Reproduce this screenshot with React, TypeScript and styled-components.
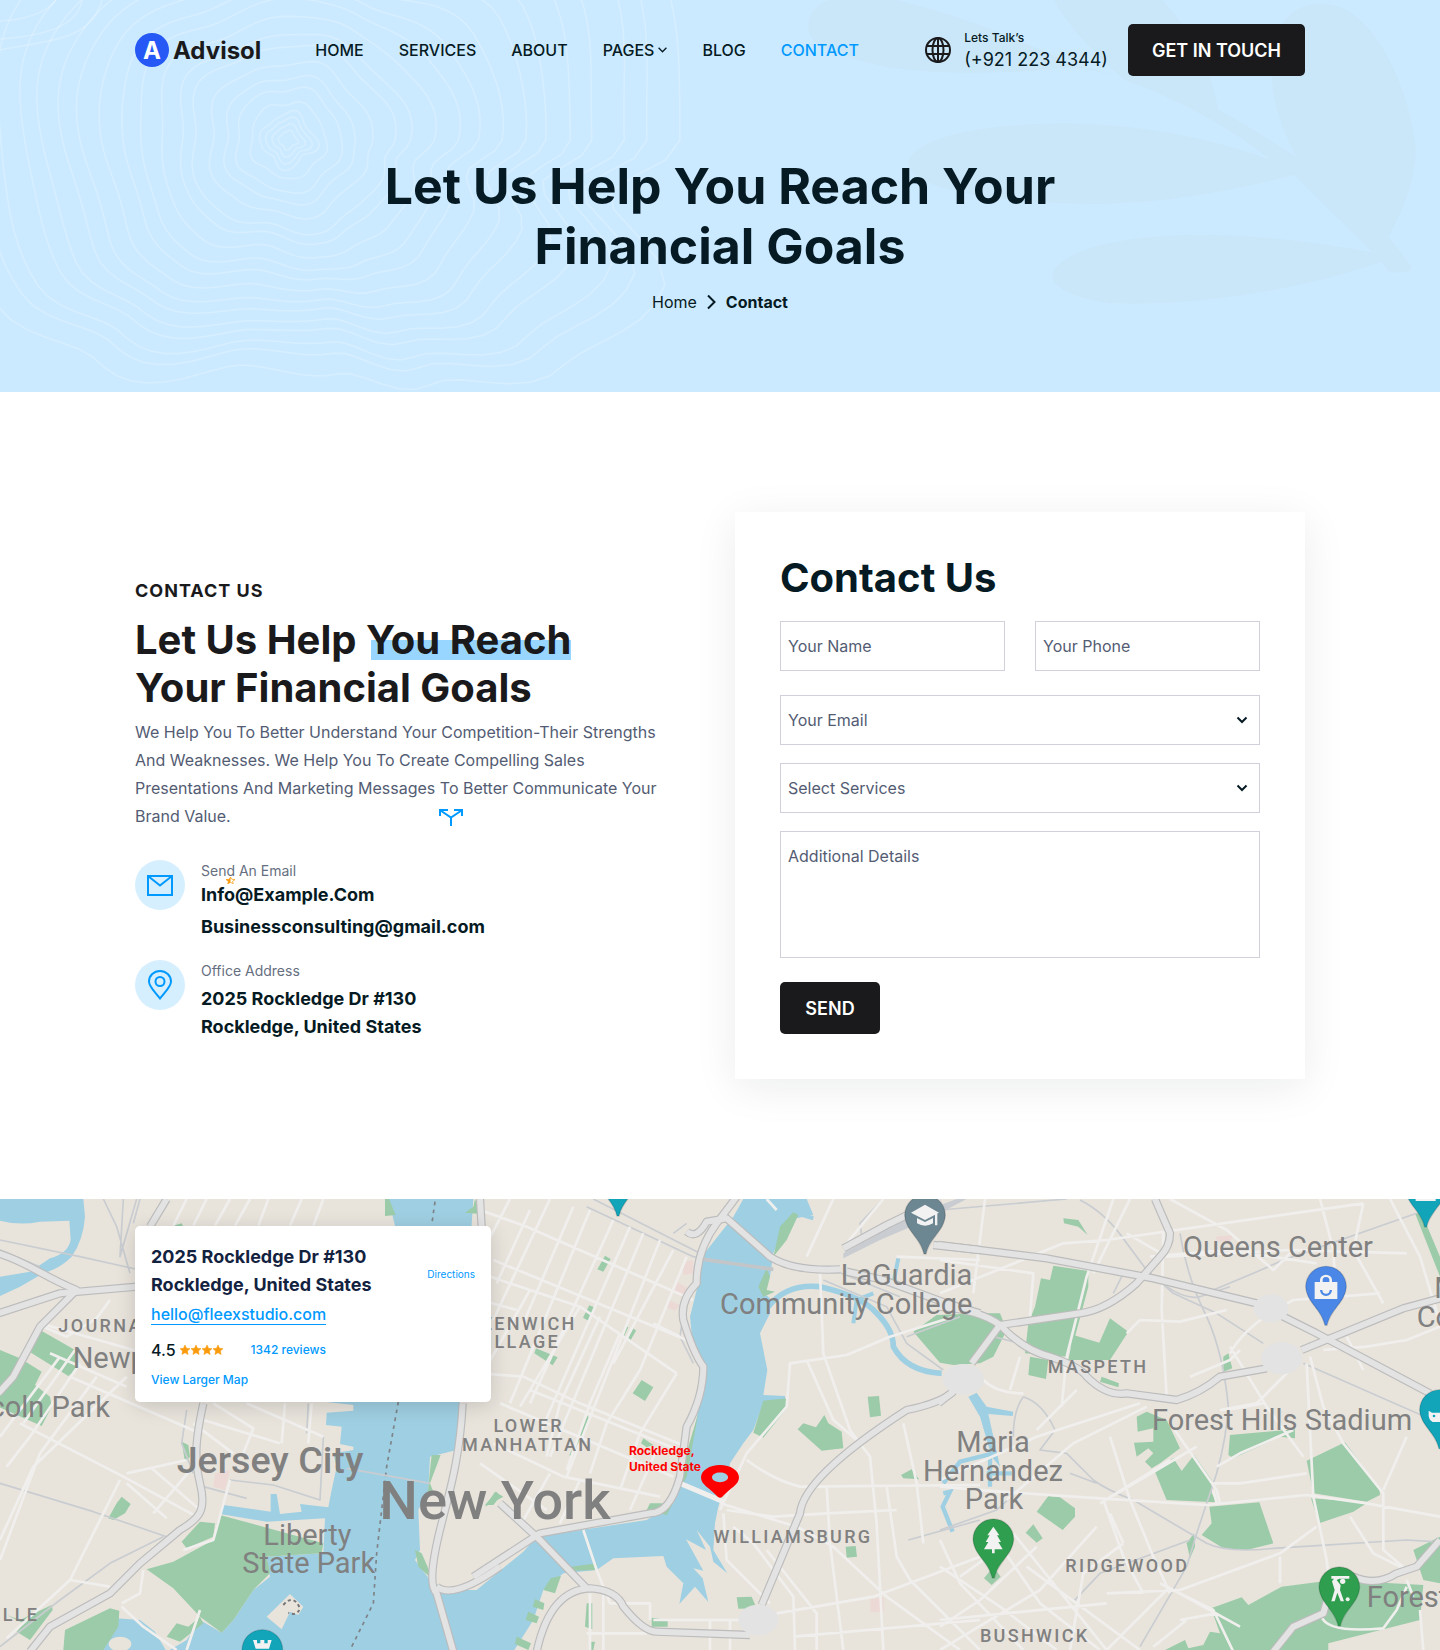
import React from "react";
import styled, { createGlobalStyle } from "styled-components";

const GlobalStyle = createGlobalStyle`
  *, *::before, *::after { box-sizing: border-box; }
  body { margin: 0; background: #fff; font-family: Inter, "Liberation Sans", sans-serif; color: #061a23; }
  h1, h2, h3, p, ul, address { margin: 0; padding: 0; font-style: normal; }
  a { color: inherit; text-decoration: none; }
  button, input, select, textarea { font-family: inherit; }
`;

/* ---------- shared ---------- */
const Container = styled.div`
  position: relative;
  width: 100%;
  max-width: 1170px;
  margin: 0 auto;
`;

const Button = styled.button`
  min-width: 100px;
  height: 52px;
  padding: 2px 24px 0;
  border: 0;
  border-radius: 5px;
  background: #1a1a1c;
  color: #fff;
  font-size: 18px;
  font-weight: 600;
  line-height: 28px;
  white-space: nowrap;
  cursor: pointer;
`;

/* ---------- hero ---------- */
const Hero = styled.section`
  position: relative;
  overflow: hidden;
  background: #cceaff;
  padding: 24px 0 76px;
`;

const HeroArt = styled.svg<{ $side: "left" | "right" }>`
  position: absolute;
  top: 0;
  ${(p) => p.$side}: 0;
`;

const Header = styled.header`
  display: flex;
  align-items: center;
  gap: 54px;
  height: 52px;
`;

const Logo = styled.a`
  display: flex;
  align-items: center;
  gap: 4px;
  color: #1a1a1c;
  font-size: 24px;
  font-weight: 700;
`;

const LogoMark = styled.span`
  display: grid;
  place-items: center;
  width: 34px;
  height: 34px;
  border-radius: 50%;
  background: #2558f5;
  color: #fff;
`;

const NavList = styled.ul`
  display: flex;
  gap: 35px;
  list-style: none;
`;

const NavLink = styled.a<{ $active?: boolean }>`
  display: flex;
  align-items: center;
  gap: 4px;
  font-size: 16px;
  font-weight: 500;
  line-height: 24px;
  color: ${(p) => (p.$active ? "#0099ff" : "#061a23")};
`;

const HeaderActions = styled.div`
  display: flex;
  align-items: center;
  gap: 20px;
  margin-left: auto;
`;

const Talk = styled.a`
  display: flex;
  align-items: center;
  gap: 13px;
`;

const TalkText = styled.span`
  display: grid;
`;

const TalkLabel = styled.span`
  font-size: 12px;
  font-weight: 500;
  line-height: 20px;
`;

const TalkNumber = styled.span`
  font-size: 18px;
  line-height: 24px;
`;

const HeroTitle = styled.h1`
  max-width: 720px;
  margin: 80px auto 0;
  text-align: center;
  font-size: 50px;
  font-weight: 700;
  line-height: 60px;
`;

const Breadcrumb = styled.nav`
  display: flex;
  align-items: center;
  justify-content: center;
  gap: 9px;
  margin-top: 12px;
  font-size: 16px;
  line-height: 28px;
`;

const Current = styled.span`
  font-weight: 700;
`;

/* ---------- contact ---------- */
const ContactSection = styled.section`
  padding: 120px 0;
`;

const ContactGrid = styled(Container)`
  display: grid;
  grid-template-columns: minmax(0, 1fr) minmax(0, 570px);
  gap: 60px;
  align-items: start;
`;

const Intro = styled.div`
  position: relative;
  padding-top: 66px;
`;

const Eyebrow = styled.p`
  color: #1a1a1c;
  font-size: 18px;
  font-weight: 700;
  line-height: 26px;
  letter-spacing: 1px;
`;

const IntroTitle = styled.h2`
  margin-top: 12px;
  color: #1a1a1c;
  font-size: 40px;
  font-weight: 700;
  line-height: 48px;
  white-space: nowrap;
`;

const Marked = styled.span`
  background: linear-gradient(#99d6ff, #99d6ff) 5px 25px / 100% 20px no-repeat;
`;

const IntroText = styled.p`
  margin-top: 6px;
  color: #535c73;
  font-size: 16px;
  line-height: 28px;
`;

const SplitMark = styled.svg`
  position: absolute;
  top: 297px;
  left: 304px;
`;

const StarMark = styled.svg`
  position: absolute;
  top: 17px;
  left: 25px;
`;

const InfoRow = styled.div`
  display: flex;
  gap: 16px;
  margin-top: 21px;
  &:first-of-type { margin-top: 30px; }
`;

const InfoIcon = styled.span`
  display: grid;
  place-items: center;
  flex: none;
  width: 50px;
  height: 50px;
  border-radius: 50%;
  background: #d6efff;
`;

const InfoBody = styled.div`
  position: relative;
`;

const InfoLabel = styled.p`
  margin-bottom: 1px;
  color: #666f80;
  font-size: 14px;
  line-height: 22px;
`;

const MailLink = styled.a`
  display: block;
  font-size: 18px;
  font-weight: 700;
  line-height: 24px;
  & + & { margin-top: 8px; }
`;

const Address = styled.address<{ $color?: string }>`
  color: ${(p) => p.$color || "#061a23"};
  font-size: 18px;
  font-weight: 700;
  line-height: 28px;
`;

const OfficeAddress = styled(Address)`
  margin-top: 3px;
`;

/* ---------- form ---------- */
const Form = styled.form`
  display: grid;
  gap: 18px;
  padding: 42px 45px 45px;
  background: #fff;
  box-shadow: 0 8px 40px rgba(6, 26, 35, 0.08);
`;

const FormTitle = styled.h2`
  margin-bottom: 1px;
  font-size: 40px;
  font-weight: 700;
  line-height: 48px;
`;

const Pair = styled.div`
  display: grid;
  grid-template-columns: 1fr 1fr;
  gap: 30px;
  margin-bottom: 6px;
`;

const fieldStyle = `
  width: 100%;
  min-width: 0;
  border: 1px solid #d0d1da;
  border-radius: 0;
  background: #fff;
  color: #535c73;
  font-size: 16px;
  line-height: 28px;
  outline: 0;
  &::placeholder { color: #535c73; opacity: 1; }
`;

const Input = styled.input`
  ${fieldStyle}
  height: 50px;
  padding: 0 7px;
`;

const SelectBox = styled.div`
  position: relative;
`;

const Select = styled.select`
  ${fieldStyle}
  display: block;
  height: 50px;
  padding: 0 40px 0 7px;
  appearance: none;
`;

const SelectChevron = styled.svg`
  position: absolute;
  top: 20px;
  right: 12px;
  pointer-events: none;
`;

const TextArea = styled.textarea`
  ${fieldStyle}
  display: block;
  height: 127px;
  padding: 10px 7px;
  resize: none;
`;

const SendButton = styled(Button)`
  justify-self: start;
  margin-top: 6px;
`;

/* ---------- map ---------- */
const MapSection = styled.section`
  position: relative;
  overflow: hidden;
  min-height: 451px;
  padding: 27px 0;
  background: #e8e4dc;
`;

const MapArt = styled.svg`
  position: absolute;
  inset: 0;
  width: 100%;
  height: 100%;
`;

const MapCard = styled.div`
  display: grid;
  grid-template-columns: 1fr auto;
  width: 356px;
  padding: 17px 16px 12px;
  border-radius: 5px;
  background: #fff;
  box-shadow: 0 4px 20px rgba(0, 0, 0, 0.15);
`;

const PlaceMail = styled.a`
  justify-self: start;
  margin-top: 5px;
  border-bottom: 1px solid #0099ff;
  color: #0099ff;
  font-size: 16px;
  font-weight: 500;
  line-height: 20px;
`;

const SmallLink = styled.a`
  color: #0099ff;
  font-size: 12px;
  font-weight: 500;
  line-height: 20px;
`;

const Directions = styled.a`
  align-self: center;
  padding-top: 6px;
  color: #0099ff;
  font-size: 10px;
  line-height: 16px;
`;

const Rating = styled.div`
  display: flex;
  align-items: center;
  grid-column: 1 / -1;
  margin-top: 13px;
  font-size: 16px;
  font-weight: 500;
  line-height: 24px;
`;

const Stars = styled.span`
  display: flex;
  gap: 1px;
  margin: 0 28px 0 4px;
`;

const LargerMap = styled(SmallLink)`
  grid-column: 1 / -1;
  margin-top: 8px;
`;

const Marker = styled.div`
  position: absolute;
  top: 244px;
  right: calc(50% - 19px);
  display: flex;
  align-items: flex-start;
  color: #ff0000;
  font-size: 12px;
  font-weight: 700;
  line-height: 16px;
`;

const MarkerPin = styled.svg`
  margin-top: 22px;
`;

/* ---------- contour lines ---------- */
const contourKeys: [number, number][] = [
  [0, 392], [10, 322], [21, 390], [40, 346], [60, 280], [78, 236], [100, 222],
  [130, 290], [150, 330], [180, 320], [210, 345], [240, 300], [270, 262],
  [300, 300], [330, 400], [360, 392],
];

function keyRadius(deg: number) {
  const d = (deg + 360) % 360;
  let i = 0;
  while (contourKeys[i + 1][0] < d) i += 1;
  const [a, ra] = contourKeys[i];
  const [b, rb] = contourKeys[i + 1];
  const t = (1 - Math.cos(((d - a) / (b - a)) * Math.PI)) / 2;
  return ra + (rb - ra) * t;
}

function contour(level: number) {
  const points: string[] = [];
  for (let deg = 0; deg < 360; deg += 3) {
    const rad = (deg * Math.PI) / 180;
    const blend = Math.min(1, Math.max(0, (level - 0.15) * 1.3));
    const base = keyRadius(deg) * blend + 290 * (1 - blend);
    const calm = 1 - level * 0.75;
    const wobble =
      1 +
      calm * 0.06 * Math.sin(rad * 5 + level * 5) +
      calm * 0.03 * Math.sin(rad * 8 - level * 8) +
      (level < 0.12 ? 0.14 * Math.sin(rad * 4 + 1) : 0);
    const r = base * level * wobble;
    points.push(`${(288 + r * Math.cos(rad)).toFixed(1)} ${(140 + r * Math.sin(rad)).toFixed(1)}`);
  }
  return `M${points.join("L")}Z`;
}

const contourLevels = [
  0.03, 0.05, 0.07, 0.09, 0.13, 0.18, 0.22, 0.27, 0.33, 0.37, 0.43, 0.49,
  0.54, 0.6, 0.66, 0.71, 0.77, 0.82, 0.89, 0.94, 1.02,
];

const Contours = () => (
  <HeroArt $side="left" width="720" height="392" viewBox="0 0 720 392" aria-hidden="true">
    <g fill="none" stroke="#fff" strokeOpacity="0.22" strokeWidth="1.5">
      {contourLevels.map((level) => (
        <path key={level} d={contour(level)} />
      ))}
      <path d="M0 21C25 20 48 12 56 0M0 39C40 36 78 28 82 0M0 50C50 40 92 40 102 0" />
    </g>
  </HeroArt>
);

const Leaves = () => (
  <HeroArt $side="right" width="720" height="392" viewBox="0 0 720 392" aria-hidden="true">
    <g fill="#cae7fa" transform="scale(.4592 .3333)">
      <path d="M192 80C192 20 230 -20 330 -15C480 20 640 110 780 200C600 230 400 225 300 180C230 150 192 130 192 80Z" />
      <path d="M640 210C720 195 800 205 840 222C980 280 1120 390 1190 472L1270 500L1255 470C1210 430 1130 360 1085 330C1070 200 1030 100 960 -5L725 -5C760 90 840 190 880 240L780 190Z" />
      <path d="M1190 475C1100 430 950 375 760 370C600 370 440 400 410 480C400 570 600 610 830 612C950 610 1100 580 1250 525L1420 757C1330 735 1220 710 1080 705C900 700 760 740 728 810C710 850 750 890 850 910C1000 920 1250 880 1440 785L1455 812Q1480 825 1503 812L1505 797L1457 712C1480 640 1515 560 1515 440C1500 250 1420 20 1320 12C1270 5 1215 40 1205 150C1190 250 1215 370 1255 470Z" />
    </g>
  </HeroArt>
);

/* ---------- icons ---------- */
const Globe = () => (
  <svg width="26" height="26" viewBox="0 0 26 26" fill="none" stroke="#1a1a1c" strokeWidth="2" aria-hidden="true">
    <circle cx="13" cy="13" r="12" />
    <ellipse cx="13" cy="13" rx="5.5" ry="12" />
    <path d="M2 9h22M2 17h22M13 1v24" />
  </svg>
);

const starPath = "M5.500 0l1.600 3.600 3.900.4-2.900 2.600.8 3.900-3.400-2-3.400 2 .8-3.900L0 4l3.900-.4z";

const Star = () => (
  <svg width="10" height="10" viewBox="0 0 11 11" fill="#f99b0c" stroke="#f99b0c" strokeWidth="0.6" strokeLinejoin="round" aria-hidden="true">
    <path d={starPath} />
  </svg>
);

const DropChevron = () => (
  <SelectChevron width="12" height="10" viewBox="0 0 12 10" fill="none" stroke="#061a23" strokeWidth="2" aria-hidden="true">
    <path d="M1.500 2.500L6 7l4.500-4.500" />
  </SelectChevron>
);

/* ---------- map drawing: three tiles laid side by side ---------- */
type Tile = { x: number; parks: string[]; streets: string; rails: string; highways: string[]; blocks?: string[] };

const tiles: Tile[] = [
  {
    x: 0,
    parks: [
      "120,420 225,480 228,540 205,558 80,480", "-5,478 60,505 125,545 105,585 150,620 155,650 125,708 -5,650",
      "365,920 392,942 375,970 340,990 325,985 350,940",
      "660,975 970,1060 965,1090 800,1100 810,1150 760,1200 700,1290 665,1328 600,1280 520,1195 440,1138 520,1115 640,1050 650,1000",
      "545,1055 600,995 645,1000 640,1040 560,1075", "190,1380 195,1320 330,1255 358,1262 355,1310 310,1380",
      "20,1275 60,1290 155,1245 158,1260 90,1350 50,1325 70,1300", "500,1340 530,1300 565,1310 600,1280 610,1300 540,1355",
      "545,755 565,765 570,800 555,815", "1295,795 1322,795 1290,880 1300,905 1283,908", "1155,27 1167,27 1187,75 1155,78",
      "1425,27 1440,72 1395,68 1420,50", "1455,945 1490,905 1500,920 1480,945", "1245,1080 1265,1090 1300,1170 1255,1130",
      "520,107 545,100 550,110",
    ],
    streets:
      "M120 400L400 480M150 490L380 590M560 27L520 107M620 27L580 107M690 27L645 107M750 27L705 107M805 27L775 107M905 27L870 107M970 27L940 107M130 410L200 440L290 385L330 330M240 520L90 740L20 830M290 560L120 790L0 1110M180 500L0 740M225 480L70 700M60 700L370 860L600 985M360 870L290 1010L210 1170L20 1345M0 1050L100 830L380 560M210 560L600 730M380 850L560 810M450 830L600 960M380 880L500 985M460 970L580 830M210 1170L330 1190M690 870L640 1050L550 1080M610 690L840 760M640 640L760 715L730 790M855 640L845 760M935 640L925 760M580 700L700 790M740 640L970 740M430 1140L420 1210L365 1240M365 1250L430 1310L530 1380M600 1260L560 1380",
    rails:
      "M0 150L240 200L420 240M310 27L350 110L390 250M370 27L360 200L410 27M420 27L400 100M0 880L280 965L500 1040M490 1040L330 1120L180 1230L0 1370M560 660L545 760L580 850M610 890L740 925M690 870L820 885L960 930L970 740M925 640L920 730M1040 835L1290 880M0 180L120 230",
    highways: ["M-5 370L180 310L410 290", "M500 27L450 110", "M-5 190C90 220 130 260 230 300L120 410L40 560L-5 610", "M610 640C590 730 580 800 600 880C620 960 600 985 540 1020L420 1120L330 1210L150 1310L90 1385", "M1440 27L1445 110", "M1388 640C1380 800 1350 900 1330 980C1290 1130 1290 1190 1310 1210L1360 1385", "M1310 1190Q1360 1230 1500 1130"],
    blocks: ["645,850 690,840 675,900 640,890"],
  },
  {
    x: 1440,
    parks: [
      "375,197 392,207 370,245 352,238", "328,346 347,354 325,392 309,383", "437,407 445,412 432,440 425,435", "460,415 468,422 452,450 445,443",
      "168,475 233,502 218,526 163,490", "485,570 520,592 495,633 458,610", "322,677 328,685 305,740 300,735", "295,745 300,748 272,800 268,795",
      "490,745 520,765 500,772 483,760", "15,950 45,905 70,920", "655,670 620,860 560,975 500,960 510,940 560,940 610,820",
      "940,67 955,75 920,150 880,200 900,110", "860,235 870,260 860,300 885,305 850,320 835,290", "850,632 920,625 920,655 850,743 820,728",
      "1033,675 1045,700 1085,725 1090,775 1025,782 953,718 970,700 1008,712", "1163,620 1197,618 1203,677 1170,682", "1300,425 1370,375 1500,370 1560,370 1580,420 1540,500 1500,520 1420,525 1380,518",
      "1263,855 1295,838 1317,868 1270,865", "1097,1070 1127,1068 1131,1100 1100,1103", "770,1222 815,1220 830,1255 775,1256", "515,1283 563,1290 563,1310 515,1310",
      "212,1165 243,1157 225,1210 190,1200", "165,1228 193,1240 190,1260 158,1250", "145,1265 177,1280 170,1300 137,1290", "110,1340 153,1360 145,1380 105,1362",
      "320,1240 337,1240 337,1318 315,1310", "330,1355 345,1355 340,1380 330,1380", "275,1130 350,1120 350,1140 275,1142",
    ],
    streets:
      "M0 60L140 110L640 330M0 250L300 350L590 550M40 210L620 450M0 550L130 560L300 640L620 770M0 330L110 360M90 27L0 200M150 60L50 280M210 27L40 390M280 50L130 400M330 60L90 640M400 90L150 640M450 110L180 730M490 130L210 800M540 150L260 860M580 180L400 520M620 200L480 540M20 530L150 300M300 350L120 650M360 380L240 640L200 800M420 430L330 640L260 840M590 550L480 730L420 900M480 540L380 700L330 850M520 400L600 440M60 640L580 860M40 760L250 860L540 920M0 820L200 960M150 600L620 790M210 850L130 990M300 870L240 1000M530 780L450 960M920 650L800 790L720 960M920 650L930 520L1100 495L1230 440L1420 380M1060 27L980 200M1020 250L1030 490L1110 720L1170 800L1190 1000L1210 1380M980 510L1060 690L1130 750M800 810Q880 870 960 890L1500 885M740 960L880 980L1040 970L1250 960M1040 890L1050 1060L1090 1380M720 940L950 1010L1060 1070L1220 1220L1440 1380M730 970L740 1110L870 1240M760 1010L820 1060L940 1220L945 1380M860 1080L1010 1270L1010 1380M890 1270L1180 1220L1500 1100M940 1340L1500 1290M1270 700L1310 880L1330 1060M1220 890L1250 1100L1290 1170L1500 1380M310 1020L350 1140L390 1240L510 1240L510 1290M330 1210V1380M370 1210V1380M520 1290L780 1290M690 1290V1380M750 1290V1380M320 1330H500M1210 27L1100 160M860 27L890 60M1250 200L1500 210",
    rails: "M320 50L640 200L870 240M340 27L660 190M580 130L620 100M610 370L600 440L640 520M1030 270L1220 350L1280 460L1390 540M1285 1050L1500 990M1150 170L1140 100L1210 27M1440 380L1280 440M1060 240L1260 320",
    highways: ["M770 20L710 100Q650 180 650 280Q600 330 610 390Q640 490 670 530Q670 620 620 710L600 860Q570 970 510 970L180 1030L-20 1160", "M620 125Q650 150 680 95L740 85L870 200Q940 245 1080 238", "M60 940L180 1050L320 1195", "M170 1385Q210 1200 330 1195Q410 1200 430 1250Q490 1325 530 1325L810 1335", "M1420 605Q1380 640 1280 660Q970 860 960 970L845 1245", "M1090 175L1220 105L1380 27", "M1360 165L1500 180", "M1100 245L1210 270L1400 340L1500 370"],
    blocks: ["610,215 640,210 640,250 610,255", "580,290 595,278 625,295 605,322 578,305", "565,330 600,345 585,362 558,350", "1170,1228 1210,1222 1212,1265 1172,1267"],
  },
  {
    x: 2820,
    parks: [
      "370,85 415,90 443,135 415,110 372,100", "340,227 445,243 445,290 405,440 380,500 255,490 265,400 285,350 303,265 330,270", "270,500 325,510 318,567 265,555",
      "510,385 565,425 510,510 385,510 400,435 478,458", "865,490 877,535 850,545 850,500", "485,560 537,580 535,592 480,575",
      "590,680 620,665 680,690 720,775 660,820 635,835 615,815 640,790 625,775 590,800 582,758 640,755 640,715 593,725", "645,845 700,805 725,843 762,795 815,870 815,910 830,937 680,930",
      "870,735 1065,718 1065,745 1020,740 880,805 865,795", "1100,812 1215,757 1318,895 1320,915 1280,935 1120,910", "1113,925 1260,935 1280,940 1240,965 1137,1000",
      "808,950 958,937 1000,1060 920,1080 850,1075 785,1035 815,1000", "740,1060 762,1030 765,1070 750,1105", "325,918 360,922 405,955 405,980 368,1020 290,965",
      "280,1003 308,1045 290,1058 257,1028", "160,1130 182,1160 155,1185 132,1165", "813,1255 905,1222 925,1245 1025,1190 1180,1170 1450,1185 1440,1290 1165,1360 1165,1385 860,1385",
      "675,1380 735,1350 745,1375 790,1365 810,1325 840,1330 880,1385", "1420,1080 1500,1040 1500,1180 1450,1170 1440,1140", "1425,70 1445,70 1500,200 1500,260",
    ],
    streets:
      "M135 27L100 310M0 210L280 250L270 380M520 27L440 260L380 500L365 650M570 27L460 250M0 310L370 160L500 150L1270 40M560 130L680 200L1050 180M670 130L665 360L680 620M630 200L860 180L1130 220M690 27L860 120L1000 240L1060 180L1400 190M1140 27L1180 180L1190 350M1270 40L1240 180L1330 340M1350 27L1440 200L1500 400M870 470L980 650L1090 800M870 490Q920 400 1060 330L1320 310M1110 500L1150 650L1210 760L1330 910L1330 1080L1400 1140M1100 520L1120 920L1160 1110L1170 1200M1080 510L950 640L840 660M750 560L870 510L900 480M600 390L720 395L860 360M560 430L600 390M1150 480L1280 470L1400 450L1500 410M1220 440L1270 540M1400 740L1330 900M600 640L290 740L0 870M620 650L400 760L200 930M770 770L480 940M480 940L690 810M510 740L570 930L640 1100L690 1210M490 930L550 1100L610 1210M830 830L900 790L1060 720M820 880L900 880L1100 850M690 700L830 900L840 940M0 890L180 905L480 925L800 945L1100 915L1280 940L1500 980M1230 980L1300 1090L1400 1140M1130 1010L1020 1090L720 1200L500 1210M1020 1100L1020 1180M830 940L820 900M410 600L290 720M240 500L210 600M130 570Q170 610 250 610M860 660L970 640M690 1190L500 1380M550 1060L430 1150L390 1380M290 1070L120 1230L0 1310M0 1380L300 1200L470 1010M220 1030L500 1380M190 1080L300 1240L480 1380M0 1130L180 1250L350 1380M0 1050L60 1180L250 1380M60 1160L200 1060M0 1290L500 1240M260 1130L600 1380M510 970L550 1060M660 1180L820 1260L880 1385M720 1290L830 1270M640 1370L740 1290M700 1200L900 1310M1145 1280Q1160 1330 1330 1315L1370 1260L1400 1190M1440 1260L1450 1380M1400 1170L1420 1220",
    rails:
      "M0 60L380 27M420 30Q500 70 560 160L620 240L700 310L830 370L970 460M720 130Q740 260 800 380Q850 490 865 650Q860 740 830 850L770 1030L740 1130L600 1370M820 300L940 250L1030 210L1430 70M680 290Q740 330 780 320L870 290M1090 520L1500 700M250 620Q220 660 220 740M250 620Q310 640 345 720L300 780L380 790L460 870Q500 900 580 930L800 1060Q860 1090 1000 1075L1400 1050L1480 1055M270 870L170 960L0 1020M400 1235L480 1150L750 1050M390 850L470 880M550 250L520 310M160 440L240 460",
    highways: ["M-5 165L320 205L640 265L950 340L1130 430L1470 610", "M645 27L690 130Q690 170 660 200L590 280Q500 360 420 370L180 405L95 520", "M-5 350Q120 360 180 405Q250 480 330 500Q420 530 440 560Q500 620 560 610L710 630Q780 610 840 560L980 535", "M1085 480L1390 355L1500 325", "M1000 1385L1060 1310L1150 1270L1170 1200L1240 1160Q1310 1190 1370 1150L1430 1130L1500 1050", "M-5 640L45 600"],
    blocks: ["825,140 880,135 870,155 835,155"],
  },
];

type LabelSpec = [string, number, number, number, ("start" | "middle" | "end")?];

const placeLabels: LabelSpec[] = [
  ["Jersey City", 810, 850, 113, "middle"], ["New York", 1485, 987, 163, "middle"],
];

const areaLabels: LabelSpec[] = [
  ["Newport", 218, 535, 87], ["Lincoln Park", 330, 680, 87, "end"], ["Liberty", 922, 1064, 87, "middle"], ["State Park", 926, 1149, 87, "middle"],
  ["LaGuardia", 2917, 286, 87, "end"], ["Community College", 2917, 373, 87, "end"], ["Queens Center", 3834, 200, 87, "middle"],
  ["Forest Hills Stadium", 3846, 721, 87, "middle"], ["Maria", 2979, 785, 87, "middle"], ["Hernandez", 2979, 872, 87, "middle"], ["Park", 2982, 958, 87, "middle"],
  ["Forest", 4100, 1252, 87], ["M", 4303, 325, 87], ["Co", 4250, 412, 87],
];

const districtLabels: LabelSpec[] = [
  ["JOURNAL", 175, 426, 54], ["GREENWICH", 1730, 420, 54, "end"], ["VILLAGE", 1680, 475, 54, "end"], ["LOWER", 1586, 727, 54, "middle"],
  ["MANHATTAN", 1583, 782, 54, "middle"], ["WILLIAMSBURG", 2379, 1060, 54, "middle"], ["MASPETH", 3294, 549, 54, "middle"],
  ["RIDGEWOOD", 3382, 1147, 54, "middle"], ["BUSHWICK", 3104, 1355, 54, "middle"], ["VILLE", 118, 1292, 54, "end"],
];

const Labels = ({ items }: { items: LabelSpec[] }) => (
  <>
    {items.map(([text, x, y, size, anchor]) => (
      <text key={text} x={x} y={y} fontSize={size} textAnchor={anchor || "start"}>
        {text}
      </text>
    ))}
  </>
);

const MapPin = ({ x, y, fill, children }: { x: number; y: number; fill: string; children?: React.ReactNode }) => (
  <g transform={`translate(${x} ${y})`}>
    <path d="M-61 0A61 61 0 1 1 61 0C58 48 14 66 3 116H-3C-14 66 -58 48 -61 0Z" fill={fill} stroke="#000" strokeOpacity="0.15" strokeWidth="4" />
    <g fill="#f2f2f2">{children}</g>
  </g>
);

const CityMap = () => (
  <MapArt viewBox="0 27 4320 1353" preserveAspectRatio="xMidYMin slice" role="img" aria-label="Map of New York">
    <rect width="4320" height="1400" fill="#e8e4dc" />
    <g fill="#9fcfe2">
      <path d="M0 27H250L255 80Q250 150 215 200Q180 235 130 250L60 290L0 318V260L90 245L150 205Q205 190 212 150L208 92L120 95Q60 108 0 92Z" />
      <path d="M1165 27L1185 107L1000 300L975 635L1060 645L1060 662L980 668L978 705L1025 710L1020 762L1060 770V780L1000 790L1010 830L995 900L985 952L900 942L905 965L840 972L830 912L812 912V965L670 945L660 972L800 995L975 985L970 1090L800 1100L810 1160L760 1200L700 1290L665 1328L600 1290L560 1350L500 1385H1540L1600 1290L1630 1200L1690 1150L1790 1140L1840 1105L1990 1098L2000 1130L2050 1180L2038 1242L2085 1190L2125 1236L2108 1165L2080 1135L2110 1142L2058 1048L2118 1080L2090 1020L2130 1070L2140 1115L2182 1150L2140 1080L2145 1000L2155 950L2180 880L2190 820L2230 760L2260 720L2290 640L2355 630V618L2290 615L2302 540L2280 430L2310 370L2310 325L2280 300L2310 260L2320 190L2360 90L2440 75L2420 27H2230L2200 80L2105 200L2090 300L2070 380L2080 480L2115 520L2100 640L2060 820L2020 940L1940 990L1610 1040L1570 1085L1430 1200H1340L1290 1170L1245 1110L1260 1080L1255 960L1285 900L1290 800L1370 780L1380 635L1420 27Z" />
      <path d="M240 1385Q270 1290 350 1285L420 1290L465 1325L500 1385Z" />
      <path d="M2905 620L2930 608L2960 650L3040 665L3038 678L2965 672L3000 830L2975 800L2940 680Z" />
    </g>
    <g fill="none" stroke="#9fcfe2">
      <path d="M2305 350Q2360 280 2460 290Q2590 320 2630 370Q2680 420 2680 470Q2720 545 2825 550" strokeWidth="17" />
      <path d="M2560 400L2570 330L2620 310M2680 280L2695 205M2390 70L2440 85" strokeWidth="12" />
      <path d="M2980 790L2880 815L2830 880M2970 800V890M2960 850H3035M2830 910L2850 905L2828 950L2858 1025" strokeWidth="13" />
    </g>
    <path d="M800 1280L870 1212L910 1250L895 1275L870 1265L845 1318Z" fill="#e8e4dc" />
    <ellipse cx="360" cy="1362" rx="34" ry="22" fill="#e8e4dc" />
    <path d="M850 1245Q880 1210 900 1255Q890 1280 865 1268" fill="none" stroke="#777" strokeWidth="6" strokeDasharray="9 9" />
    <path d="M2530 205L2640 150L2780 90L2900 27H2870L2700 90L2620 140L2530 190Z" fill="#c9ccd1" />

    {tiles.map((tile) => (
      <g key={tile.x} transform={`translate(${tile.x} 0)`}>
        {tile.parks.map((points) => (
          <polygon key={points} points={points} fill="#9bcba8" />
        ))}
        {tile.blocks?.map((points) => (
          <polygon key={points} points={points} fill="#ecd9d5" />
        ))}
      </g>
    ))}
    <path d="M1305 35L1295 105M1195 635L1160 830L1130 1090L1120 1240L1050 1380" fill="none" stroke="#7d8388" strokeWidth="5" strokeDasharray="11 13" />
    <g fill="none" strokeLinejoin="round">
      {tiles.map((tile) => (
        <g key={tile.x} transform={`translate(${tile.x} 0)`}>
          <path d={tile.rails} stroke="#c9ccd0" strokeWidth="5" />
          <path d={tile.streets} stroke="#f0efed" strokeWidth="8" />
        </g>
      ))}
      <path d="M2040 880L2170 935" stroke="#f0efed" strokeWidth="16" />
      <path d="M2110 208L2320 238" stroke="#c3c6c9" strokeWidth="11" />
      {tiles.map((tile) => (
        <g key={tile.x} transform={`translate(${tile.x} 0)`}>
          {tile.highways.map((d) => (
            <path key={d} d={d} stroke="#bcbcbc" strokeWidth="25" />
          ))}
        </g>
      ))}
      {tiles.map((tile) => (
        <g key={tile.x} transform={`translate(${tile.x} 0)`}>
          {tile.highways.map((d) => (
            <path key={d} d={d} stroke="#e3e3e3" strokeWidth="18" />
          ))}
        </g>
      ))}
    </g>
    <g fill="#e3e3e3">
      <ellipse cx="2890" cy="568" rx="62" ry="46" />
      <ellipse cx="3813" cy="355" rx="52" ry="42" />
      <ellipse cx="3845" cy="505" rx="62" ry="48" />
      <ellipse cx="2275" cy="1290" rx="60" ry="46" />
    </g>

    <g fontFamily="Roboto, 'Liberation Sans', sans-serif" fill="#808080">
      <Labels items={areaLabels} />
      <g fontWeight="500">
        <Labels items={placeLabels} />
      </g>
      <g fontWeight="500" letterSpacing="7">
        <Labels items={districtLabels} />
      </g>
    </g>

    <MapPin x={2775} y={76} fill="#6c8692">
      <path d="M-42 -8L0 -32L42 -8L0 14ZM-24 8V24Q0 38 24 24V8L0 20ZM30 -4H37V30H30Z" />
    </MapPin>
    <MapPin x={1854} y={-38} fill="#12a5ba" />
    <MapPin x={4277} y={-5} fill="#12a5ba">
      <path d="M-30 30H30V38H-30Z" />
    </MapPin>
    <MapPin x={3978} y={290} fill="#4b87e6">
      <path fillRule="evenodd" d="M-34 -14H-18V-20A18 16 0 0 1 18 -20V-14H34V37H-34ZM-10 -14H10V-20A10 9 0 0 0 -10 -20ZM-18 10A18 18 0 0 0 18 10H11A11 11 0 0 1 -11 10Z" />
    </MapPin>
    <MapPin x={4320} y={660} fill="#12a5ba">
      <path d="M-34 2L-24 8H0V36H-22Q-34 30 -34 16Z" />
      <circle cx="-18" cy="18" r="4" fill="#12a5ba" />
    </MapPin>
    <MapPin x={2980} y={1048} fill="#2f9e4f">
      <path d="M0 -38L18 -12H11L23 8H15L28 30H4V42H-4V30H-28L-15 8H-23L-11 -12H-18Z" />
    </MapPin>
    <MapPin x={4018} y={1192} fill="#2f9e4f">
      <path d="M-24 -34H30V-26H0L-8 -22L4 -6L2 8L14 42H4L-6 16L-14 42H-24L-14 8L-22 -18L-16 -26H-24Z" />
      <circle cx="10" cy="-18" r="8" />
      <circle cx="25" cy="36" r="6" />
    </MapPin>
    <MapPin x={787} y={1380} fill="#12a5ba">
      <path d="M-28 -30H-16V-20H-6V-30H6V-20H16V-30H28L20 -4H-20Z" />
    </MapPin>
  </MapArt>
);

const navItems = ["HOME", "SERVICES", "ABOUT", "PAGES", "BLOG", "CONTACT"];

export default function App() {
  return (
    <>
      <GlobalStyle />
      <Hero>
        <Contours />
        <Leaves />
        <Container>
          <Header>
            <Logo href="#">
              <LogoMark>A</LogoMark>
              Advisol
            </Logo>
            <nav aria-label="Main">
              <NavList>
                {navItems.map((item) => (
                  <li key={item}>
                    <NavLink href="#" $active={item === "CONTACT"}>
                      {item}
                      {item === "PAGES" && (
                        <svg width="9" height="6" viewBox="0 0 9 6" fill="none" stroke="#061a23" strokeWidth="1.3" aria-hidden="true">
                          <path d="M.6.8l3.900 4 3.900-4" />
                        </svg>
                      )}
                    </NavLink>
                  </li>
                ))}
              </NavList>
            </nav>
            <HeaderActions>
              <Talk href="#">
                <Globe />
                <TalkText>
                  <TalkLabel>Lets Talk’s</TalkLabel>
                  <TalkNumber>(+921 223 4344)</TalkNumber>
                </TalkText>
              </Talk>
              <Button type="button">GET IN TOUCH</Button>
            </HeaderActions>
          </Header>
          <HeroTitle>Let Us Help You Reach Your Financial Goals</HeroTitle>
          <Breadcrumb aria-label="Breadcrumb">
            <a href="#">Home</a>
            <svg width="11" height="16" viewBox="0 0 11 16" fill="none" stroke="#061a23" strokeWidth="2" aria-hidden="true">
              <path d="M2 1.500L8.500 8 2 14.500" />
            </svg>
            <Current>Contact</Current>
          </Breadcrumb>
        </Container>
      </Hero>

      <ContactSection>
        <ContactGrid>
          <Intro>
            <Eyebrow>CONTACT US</Eyebrow>
            <IntroTitle>
              Let Us Help <Marked>You Reach</Marked>
              <br />
              Your Financial Goals
            </IntroTitle>
            <IntroText>
              We Help You To Better Understand Your Competition-Their Strengths And Weaknesses. We Help You To Create
              Compelling Sales Presentations And Marketing Messages To Better Communicate Your Brand Value.
            </IntroText>
            <SplitMark width="24" height="17" viewBox="0 0 24 17" fill="none" stroke="#0099ff" strokeWidth="2" aria-hidden="true">
              <path d="M1 7V1h8M23 7V1h-8M1.500 1.500L12 8.500l10.500-7M12 8v9" />
            </SplitMark>
            <InfoRow>
              <InfoIcon>
                <svg width="26" height="21" viewBox="0 0 26 21" fill="none" stroke="#0099ff" strokeWidth="2" aria-hidden="true">
                  <path d="M1 1h24v19H1zM1 1l12 9.500L25 1" />
                </svg>
              </InfoIcon>
              <InfoBody>
                <InfoLabel>Send An Email</InfoLabel>
                <MailLink href="#">Info@Example.Com</MailLink>
                <MailLink href="#">Businessconsulting@gmail.com</MailLink>
                <StarMark width="9" height="7" viewBox="0 0 11 11" preserveAspectRatio="none" aria-hidden="true">
                  <path d={starPath} fill="none" stroke="#f99b0c" />
                  <path d="M5.500 0v8.500l-3.400 2 .8-3.900L0 4l3.900-.4z" fill="#f99b0c" />
                </StarMark>
              </InfoBody>
            </InfoRow>
            <InfoRow>
              <InfoIcon>
                <svg width="24" height="30" viewBox="0 0 24 30" fill="none" stroke="#0099ff" strokeWidth="2" aria-hidden="true">
                  <path d="M12 28.500C6 21 1 16.500 1 11.500a11 10.500 0 0 1 22 0C23 16.500 18 21 12 28.500z" />
                  <circle cx="12" cy="11.500" r="4.500" />
                </svg>
              </InfoIcon>
              <InfoBody>
                <InfoLabel>Office Address</InfoLabel>
                <OfficeAddress>
                  2025 Rockledge Dr #130
                  <br />
                  Rockledge, United States
                </OfficeAddress>
              </InfoBody>
            </InfoRow>
          </Intro>

          <Form onSubmit={(event) => event.preventDefault()}>
            <FormTitle>Contact Us</FormTitle>
            <Pair>
              <Input type="text" aria-label="Your Name" placeholder="Your Name" />
              <Input type="tel" aria-label="Your Phone" placeholder="Your Phone" />
            </Pair>
            {["Your Email", "Select Services"].map((label) => (
              <SelectBox key={label}>
                <Select aria-label={label} defaultValue="">
                  <option value="">{label}</option>
                </Select>
                <DropChevron />
              </SelectBox>
            ))}
            <TextArea aria-label="Additional Details" placeholder="Additional Details" />
            <SendButton type="submit">SEND</SendButton>
          </Form>
        </ContactGrid>
      </ContactSection>

      <MapSection>
        <CityMap />
        <Container>
          <MapCard>
            <Address $color="#13223f">
              2025 Rockledge Dr #130
              <br />
              Rockledge, United States
            </Address>
            <Directions href="#">Directions</Directions>
            <PlaceMail href="#">hello@fleexstudio.com</PlaceMail>
            <Rating>
              4.5
              <Stars>
                <Star />
                <Star />
                <Star />
                <Star />
              </Stars>
              <SmallLink href="#">1342 reviews</SmallLink>
            </Rating>
            <LargerMap href="#">View Larger Map</LargerMap>
          </MapCard>
        </Container>
        <Marker>
          <span>
            Rockledge,
            <br />
            United State
          </span>
          <MarkerPin width="38" height="33" viewBox="0 0 38 33" aria-hidden="true">
            <path
              fill="#ff0000"
              fillRule="evenodd"
              d="M19 0C8.500 0 0 5.500 0 12.500C0 20 9 23 17 32Q19 33.500 21 32C29 23 38 20 38 12.500C38 5.500 29.500 0 19 0ZM19 7.500C23.500 7.500 27 9.500 27 12.300S23.500 17.200 19 17.200S11 15 11 12.300S14.500 7.500 19 7.500Z"
            />
          </MarkerPin>
        </Marker>
      </MapSection>
    </>
  );
}
